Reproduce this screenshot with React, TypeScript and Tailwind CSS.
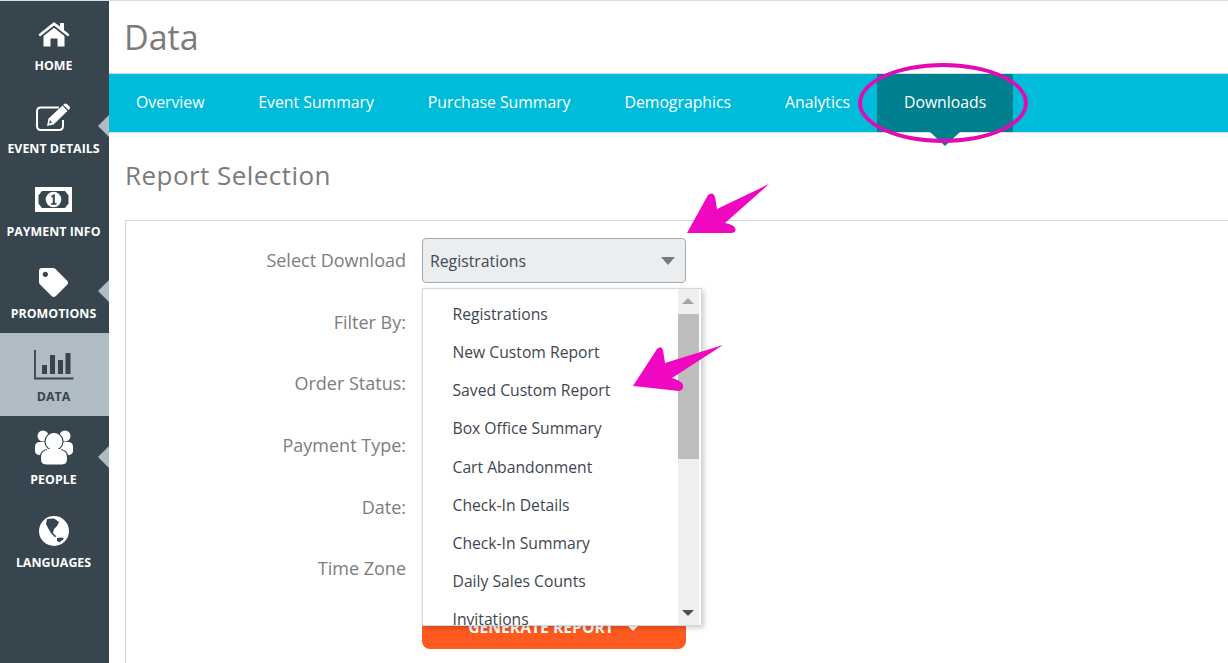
import React from "react";
import { FaTag } from "react-icons/fa";

function HomeIcon() {
  return (
    <svg width="32" height="26" viewBox="0 0 32 26">
      <path d="M0.500 13.500 L16 1 L22 5.500 V2 H26 V9 L31.500 13.500 L30 15.500 L16 4.500 L2 15.500 Z" fill="#fff" />
      <path d="M5.500 15 L16 6.800 L26.500 15 V25.500 H19.500 V17.500 H12.500 V25.500 H5.500 Z" fill="#fff" />
    </svg>
  );
}

function MoneyIcon() {
  return (
    <svg width="37" height="25" viewBox="0 0 37 25">
      <rect x="0" y="0" width="37" height="25" fill="#fff" />
      <path d="M7 4 H30 L33.500 8.500 V16.500 L30 21 H7 L3.500 16.500 V8.500 Z" fill="#36454e" />
      <circle cx="18.500" cy="12.500" r="7.800" fill="#fff" />
      <path d="M16.300 8.800 L19.800 7 V16 H21.500 V17.800 H16.200 V16 H17.800 V10 L16.300 10.600 Z" fill="#36454e" />
    </svg>
  );
}

function EditIcon() {
  return (
    <svg width="35" height="28" viewBox="0 0 35 28">
      <path d="M27 17 V23 Q27 27 23 27 H5 Q1 27 1 23 V8.500 Q1 4.500 5 4.500 H23" fill="none" stroke="#fff" strokeWidth="2" />
      <path d="M12.500 15.500 L26.500 2.500 L31.500 8 L17.500 21.500 L11 23 Z" fill="#fff" />
      <path d="M28 1 Q29.500 0 31 1 L33.500 3.500 Q34.500 5 33.500 6 L32.500 7 L27.200 1.800 Z" fill="#fff" />
      <path d="M14 17 L16 19.500 L13 20.500 Z" fill="#36454e" />
    </svg>
  );
}

function ChartIcon() {
  return (
    <svg width="40" height="30" viewBox="0 0 40 30">
      <path d="M1 0 V28.500 H39.500" fill="none" stroke="#36454e" strokeWidth="1.800" />
      <rect x="8" y="15" width="5" height="9" fill="#36454e" />
      <rect x="16" y="5" width="5" height="19" fill="#36454e" />
      <rect x="24" y="10" width="5" height="14" fill="#36454e" />
      <rect x="31.500" y="3" width="5" height="21" fill="#36454e" />
    </svg>
  );
}

function PeopleIcon() {
  return (
    <svg width="38" height="35" viewBox="0 0 38 35">
      <circle cx="8" cy="6" r="5.500" fill="#fff" />
      <circle cx="30" cy="6" r="5.500" fill="#fff" />
      <path d="M0 21 V17 Q0 12 5 12 H33 Q38 12 38 17 V21 Q38 24 34 25 H4 Q0 24 0 21 Z" fill="#fff" />
      <path d="M5.500 30 V27 Q5.500 20 13 19.500 H25 Q32.500 20 32.500 27 V30 Q32.500 35 27 35 H11 Q5.500 35 5.500 30 Z" fill="#fff" stroke="#36454e" strokeWidth="1.200" />
      <circle cx="19" cy="11.500" r="9" fill="#fff" stroke="#36454e" strokeWidth="1.200" />
      <rect x="12" y="19" width="14" height="4" fill="#fff" />
    </svg>
  );
}

function GlobeIcon() {
  return (
    <svg width="30" height="30" viewBox="0 0 30 30">
      <circle cx="15" cy="15" r="15" fill="#fff" />
      <path d="M8 3 L15 2.500 L20 6 L18 10 L15 13 L14 17 L17 20 L16 21.500 L12 17 L9 12 L7 8 Z" fill="#36454e" />
      <path d="M18 22 L23 21.500 L25 23 L20 26.500 L18 24.500 Z" fill="#36454e" />
    </svg>
  );
}

function NavItem({ label, icon, active, notch }: { label: string; icon: React.ReactNode; active?: boolean; notch?: boolean }) {
  return (
    <div className={`relative flex h-[82.800px] flex-col items-center pr-[2px] ${active ? "bg-[#afbcc3] text-[#36454e]" : "text-white"}`}>
      <div className="flex h-[57px] items-center justify-center pt-[7px]">{icon}</div>
      <div className="text-[12.400px] leading-[14px] font-bold whitespace-nowrap">{label}</div>
      {notch && (
        <div className="absolute right-0 top-[30px] h-0 w-0 border-y-[11px] border-r-[11px] border-y-transparent border-r-[#afbcc3]" />
      )}
    </div>
  );
}

function Tab({ label, active }: { label: string; active?: boolean }) {
  return (
    <div className={`relative flex h-full items-center px-[27px] text-[15.770px] text-white whitespace-nowrap ${active ? "bg-[#00808f]" : ""}`}>
      {label}
      {active && (
        <div className="absolute left-1/2 top-full h-0 w-0 -translate-x-1/2 border-x-[15px] border-t-[14px] border-x-transparent border-t-[#00808f]" />
      )}
    </div>
  );
}

function FormRow({ label, children }: { label: string; children?: React.ReactNode }) {
  return (
    <div className="flex h-[61.600px] items-center">
      <div className="w-[280px] text-right text-[18px] text-[#7d7d7d]">{label}</div>
      <div className="ml-[16px]">{children}</div>
    </div>
  );
}

const items = [
  "Registrations",
  "New Custom Report",
  "Saved Custom Report",
  "Box Office Summary",
  "Cart Abandonment",
  "Check-In Details",
  "Check-In Summary",
  "Daily Sales Counts",
  "Invitations",
];

export default function App() {
  return (
    <div className="relative h-[663px] w-[1228px] overflow-hidden bg-white font-['Open_Sans',sans-serif]">
      <div className="h-[1px] bg-[#d5dde1]" />
      <div className="flex h-[662px]">
        <div className="w-[109px] shrink-0 bg-[#36454e] pt-px">
          <NavItem label="HOME" icon={<HomeIcon />} />
          <NavItem label="EVENT DETAILS" notch icon={<EditIcon />} />
          <NavItem label="PAYMENT INFO" icon={<MoneyIcon />} />
          <NavItem label="PROMOTIONS" notch icon={<FaTag size={29} color="#fff" />} />
          <NavItem label="DATA" active icon={<ChartIcon />} />
          <NavItem label="PEOPLE" notch icon={<PeopleIcon />} />
          <NavItem label="LANGUAGES" icon={<GlobeIcon />} />
        </div>
        <div className="min-w-0 flex-1">
          <div className="flex h-[72px] items-center pl-[15px] text-[34px] text-[#7b7b7b]">Data</div>
          <div className="flex h-[60px] border-y border-[#d5dde1] bg-[#00bcdb]">
            <Tab label="Overview" />
            <Tab label="Event Summary" />
            <Tab label="Purchase Summary" />
            <Tab label="Demographics" />
            <Tab label="Analytics" />
            <Tab label="Downloads" active />
          </div>
          <div className="flex h-[87px] items-center pb-[2px] pl-4 text-[26px] tracking-[0.450px] text-[#7b7b7b]">Report Selection</div>
          <div className="relative ml-4 h-[500px] border-t border-l border-[#cfd8dc] pt-[9px]">
            <FormRow label="Select Download">
              <div className="flex h-[45px] w-[264px] items-center justify-between rounded-[4px] border border-[#a8a8a8] bg-[#ebeef1] pl-[7px] pr-[10px] text-[15.800px] text-[#3f4a52]">
                <span className="pt-[2px]">Registrations</span>
                <div className="h-0 w-0 border-x-[7px] border-t-[8px] border-x-transparent border-t-[#7a7a7a]" />
              </div>
            </FormRow>
            <FormRow label="Filter By:" />
            <FormRow label="Order Status:" />
            <FormRow label="Payment Type:" />
            <FormRow label="Date:" />
            <FormRow label="Time Zone" />
            <div className="absolute left-[296px] top-[383px] flex h-[45px] w-[264px] items-end justify-center gap-3 rounded-[8px] bg-[#ff5a1f] pb-[9px] text-[15.700px] font-bold text-white">
              GENERATE REPORT
              <div className="mb-[9px] h-0 w-0 border-x-[7px] border-t-[7px] border-x-transparent border-t-white" />
            </div>
            <div className="absolute left-[296px] top-[67px] flex h-[338px] w-[280px] overflow-hidden border border-[#cfd8dc] bg-white shadow-[2px_2px_5px_rgba(0,0,0,0.2)]">
              <div className="min-w-0 flex-1 pl-[29.500px] pt-[6.600px] text-[15.700px] text-[#40464f]">
                {items.map((t) => (
                  <div key={t} className="flex h-[38.200px] items-center whitespace-nowrap">{t}</div>
                ))}
              </div>
              <div className="relative mr-[2px] w-[21px] bg-[#efefef]">
                <div className="absolute left-[4px] top-[9px] h-0 w-0 border-x-[6px] border-b-[6px] border-x-transparent border-b-[#a3a3a3]" />
                <div className="absolute left-0 top-[25px] h-[145px] w-full bg-[#bdbdbd]" />
                <div className="absolute bottom-[9px] left-[4px] h-0 w-0 border-x-[6px] border-t-[6px] border-x-transparent border-t-[#505050]" />
              </div>
            </div>
          </div>
        </div>
      </div>
      <div className="absolute left-[858px] top-[63px] h-[80px] w-[170px] rounded-[50%] border-[4px] border-[#e20ab5]" />
      <svg className="absolute left-[685px] top-[182px] h-[56px] w-[86px]" viewBox="0 0 86 56">
        <path d="M84 2 L32 27 L30 15 Q28 9 23 13 L2 51 L47 51 Q52 50 50 46 Q49 43 40 41 Z" fill="#ef07c2" />
      </svg>
      <svg className="absolute left-[632px] top-[344px] h-[50px] w-[92px]" viewBox="0 0 92 50">
        <path d="M91 1 L33 19 L31 6 Q29 1 25 5 L1 42 L47 47 Q52 46 51 41 Q50 37 40 34 Z" fill="#ef07c2" />
      </svg>
    </div>
  );
}
